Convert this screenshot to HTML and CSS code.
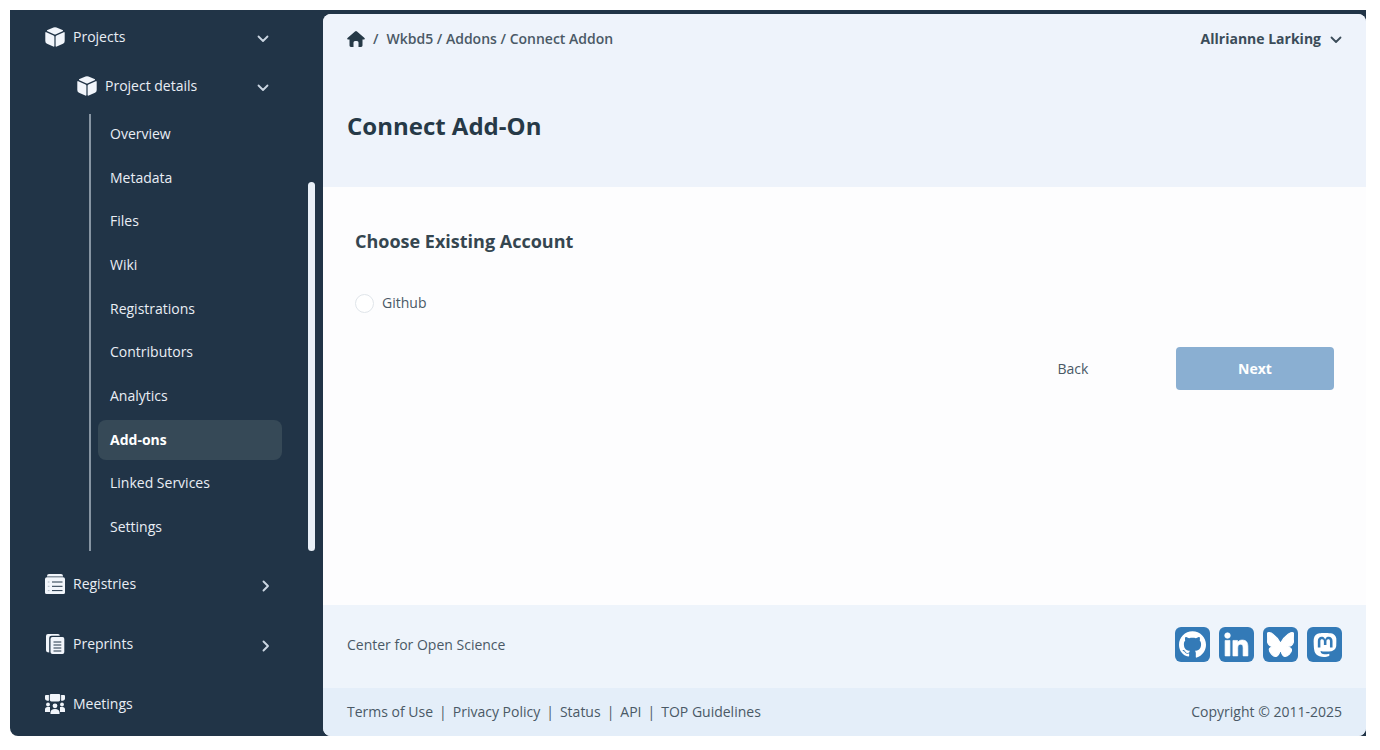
FILE: index.html
```html
<!DOCTYPE html>
<html lang="en">
<head>
<meta charset="utf-8">
<meta name="viewport" content="width=device-width, initial-scale=1">
<title>Connect Add-On</title>
<link rel="stylesheet" href="styles.css">
</head>
<body>
<svg class="defs" aria-hidden="true">
  <symbol id="cube" viewBox="0 0 20 20">
    <path d="M8.500.5Q10-.2 11.500.5L17.500 3Q18.600 3.600 17.600 4.200L11 7.200Q10 7.600 9 7.200L2.400 4.200Q1.400 3.600 2.500 3Z"/>
    <path d="M1.300 5.200 8.500 8.400Q9.400 8.800 9.400 9.800V18.800Q9.400 20 8.300 19.500L2 16.800Q.3 16 .3 14V6Q.4 4.800 1.300 5.200Z"/>
    <path d="M18.700 5.200 11.500 8.400Q10.600 8.800 10.600 9.800V18.800Q10.600 20 11.700 19.500L18 16.800Q19.700 16 19.700 14V6Q19.600 4.800 18.700 5.200Z"/>
  </symbol>
  <symbol id="down" viewBox="0 0 12 8"><path d="M1.500 1.500 6 6 10.500 1.500" fill="none" stroke="currentColor" stroke-width="1.800" stroke-linecap="round" stroke-linejoin="round"/></symbol>
  <symbol id="right" viewBox="0 0 8 12"><path d="M1.500 1.500 6 6 1.500 10.500" fill="none" stroke="currentColor" stroke-width="1.900" stroke-linecap="round" stroke-linejoin="round"/></symbol>
</svg>
<div class="app">
  <nav class="sidebar" aria-label="Main">
    <button class="row row-projects" type="button"><svg class="icon"><use href="#cube"/></svg><span>Projects</span><svg class="chev-down"><use href="#down"/></svg></button>
    <button class="row row-details" type="button"><svg class="icon"><use href="#cube"/></svg><span>Project details</span><svg class="chev-down"><use href="#down"/></svg></button>
    <div class="group">
      <ul class="sublist">
        <li><a href="#">Overview</a></li>
        <li><a href="#">Metadata</a></li>
        <li><a href="#">Files</a></li>
        <li><a href="#">Wiki</a></li>
        <li><a href="#">Registrations</a></li>
        <li><a href="#">Contributors</a></li>
        <li><a href="#">Analytics</a></li>
        <li><a href="#" class="active" aria-current="page">Add-ons</a></li>
        <li><a href="#">Linked Services</a></li>
        <li><a href="#">Settings</a></li>
      </ul>
      <div class="thumb"></div>
    </div>
    <button class="row" type="button"><svg class="icon" viewBox="0 0 20 20"><path d="M4 0h12q2 0 2 2v.4H2V2q0-2 2-2ZM2 3.200h16q2 0 2 1.800v13.500q0 1.500-1.500 1.500h-17Q0 20 0 18.500V5q0-1.800 2-1.800Z"/><path class="cut" d="M7 8H17.500M7 12.300H17.500M7 16.600H17.500"/><path class="cut faint" d="M2.800 8H4.500M2.800 12.300H4.500M2.800 16.600H4.500"/></svg><span>Registries</span><svg class="chev-right"><use href="#right"/></svg></button>
    <button class="row" type="button"><svg class="icon" viewBox="0 0 20 20"><path d="M3 0h10q1.800 0 1.800 1.800H6.500Q4.200 1.800 4.200 4v14.500Q1 18.500 1 16V2Q1 0 3 0Z"/><path d="M7.500 3h10Q19.300 3 19.300 5v13q0 2-1.800 2h-10Q5.500 20 5.500 18V5q0-2 2-2Z"/><path class="cut" d="M8.500 8H16.300M8.500 11H16.300M8.500 14H16.300M8.500 17H16.300"/></svg><span>Preprints</span><svg class="chev-right"><use href="#right"/></svg></button>
    <button class="row" type="button"><svg class="icon" viewBox="0 0 20 20"><path d="M6 0h8q1.200 0 1.200 1.200v4.600q0 1.700-1.700 1.700h-7q-1.700 0-1.700-1.700V1.200Q4.800 0 6 0ZM1 1h2.900v5.800Q0 6.800 0 4.500V2q0-1 1-1ZM19 1h-2.900v5.800q3.900 0 3.900-2.300V2q0-1-1-1Z"/><circle cx="3" cy="10.500" r="1.900"/><circle cx="17" cy="10.500" r="1.900"/><circle cx="10" cy="11.800" r="2.400"/><path d="M0 18v-2.500Q0 13 2.500 13H5v5ZM20 18v-2.500q0-2.500-2.500-2.500H15v5ZM5.500 20v-1.500q0-3.500 4.500-3.500t4.500 3.500V20Z"/></svg><span>Meetings</span></button>
  </nav>
  <div class="main">
    <header class="hero">
      <div class="topbar">
        <nav class="crumbs" aria-label="Breadcrumb">
          <a href="#" aria-label="Home"><svg class="home" viewBox="0 0 18 16"><path d="M9 0Q9.500 0 10 .4L17.500 7q.5.500.2 1.100-.3.500-1 .5h-1.200v6q0 1.400-1.400 1.400h-2.600V11.500Q11.500 10 10 10H8q-1.500 0-1.500 1.500V16H3.900q-1.400 0-1.400-1.400v-6H1.300q-.7 0-1-.5Q0 7.500.5 7L8 .4Q8.500 0 9 0Z"/></svg></a>
          <span>/</span>
          <span><a href="#">Wkbd5</a> / <a href="#">Addons</a> / <a href="#">Connect Addon</a></span>
        </nav>
        <button class="user" type="button">Allrianne Larking<svg class="chev-down"><use href="#down"/></svg></button>
      </div>
      <h1>Connect Add-On</h1>
    </header>
    <main class="content">
      <h2>Choose Existing Account</h2>
      <label class="choice"><input type="radio" name="account">Github</label>
      <div class="actions">
        <button class="back" type="button">Back</button>
        <button class="next" type="button">Next</button>
      </div>
    </main>
    <footer>
      <div class="foot-top">
        <span>Center for Open Science</span>
        <div class="social">
          <a href="#" aria-label="GitHub"><svg viewBox="0 0 24 24"><path d="M12 .297c-6.630 0-12 5.373-12 12 0 5.303 3.438 9.800 8.205 10.385.6.113.82-.258.82-.577 0-.285-.01-1.040-.015-2.040-3.338.724-4.042-1.610-4.042-1.610C4.422 18.070 3.633 17.700 3.633 17.700c-1.087-.744.084-.729.084-.729 1.205.084 1.838 1.236 1.838 1.236 1.070 1.835 2.809 1.305 3.495.998.108-.776.417-1.305.76-1.605-2.665-.3-5.466-1.332-5.466-5.930 0-1.310.465-2.380 1.235-3.220-.135-.303-.54-1.523.105-3.176 0 0 1.005-.322 3.300 1.230.96-.267 1.980-.399 3-.405 1.020.006 2.040.138 3 .405 2.280-1.552 3.285-1.230 3.285-1.230.645 1.653.24 2.873.12 3.176.765.84 1.230 1.910 1.230 3.220 0 4.610-2.805 5.625-5.475 5.920.42.36.81 1.096.81 2.220 0 1.606-.015 2.896-.015 3.286 0 .315.21.69.825.57C20.565 22.092 24 17.592 24 12.297c0-6.627-5.373-12-12-12"/></svg></a>
          <a href="#" aria-label="LinkedIn"><svg viewBox="2 2 20 20"><path d="M20.447 20.452h-3.554v-5.569c0-1.328-.027-3.037-1.852-3.037-1.853 0-2.136 1.445-2.136 2.939v5.667H9.351V9h3.414v1.561h.046c.477-.9 1.637-1.850 3.370-1.850 3.601 0 4.267 2.370 4.267 5.455v6.286zM5.337 7.433a2.062 2.062 0 0 1-2.063-2.065 2.064 2.064 0 1 1 2.063 2.065zm1.782 13.019H3.555V9h3.564v11.452z" stroke="currentColor" stroke-width=".5"/></svg></a>
          <a href="#" aria-label="Bluesky"><svg viewBox="0 0 24 24"><path d="M12 10.800c-1.087-2.114-4.046-6.053-6.798-7.995C2.566.944 1.561 1.266.902 1.565.139 1.908 0 3.080 0 3.768c0 .69.378 5.650.624 6.479.815 2.736 3.713 3.660 6.383 3.364-3.912.58-7.387 2.005-2.830 7.078 5.013 5.190 6.870-1.113 7.823-4.308.953 3.195 2.050 9.271 7.733 4.308 4.267-4.308 1.172-6.498-2.740-7.078 2.670.297 5.568-.628 6.383-3.364.246-.828.624-5.790.624-6.478 0-.69-.139-1.861-.902-2.206-.659-.298-1.664-.62-4.300 1.240C16.046 4.748 13.087 8.687 12 10.800Z" stroke="currentColor" stroke-width="1"/></svg></a>
          <a href="#" aria-label="Mastodon"><svg viewBox="0 0 24 24"><path d="M23.268 5.313c-.35-2.578-2.617-4.610-5.304-5.004C17.510.242 15.792 0 11.813 0h-.03c-3.980 0-4.835.242-5.288.309C3.882.692 1.496 2.518.917 5.127.64 6.412.61 7.837.661 9.143c.074 1.874.088 3.745.26 5.611.118 1.240.325 2.470.62 3.680.55 2.237 2.777 4.098 4.960 4.857 2.336.792 4.849.923 7.256.38.265-.061.527-.132.786-.213.585-.184 1.270-.39 1.774-.753a.057.057 0 0 0 .023-.043v-1.809a.052.052 0 0 0-.02-.041.053.053 0 0 0-.046-.01 20.282 20.282 0 0 1-4.709.545c-2.730 0-3.463-1.284-3.674-1.818a5.593 5.593 0 0 1-.319-1.433.053.053 0 0 1 .066-.054c1.517.363 3.072.546 4.632.546.376 0 .75 0 1.125-.01 1.570-.044 3.224-.124 4.768-.422.038-.008.077-.015.11-.024 2.435-.464 4.753-1.920 4.989-5.604.008-.145.03-1.520.03-1.670.002-.512.167-3.630-.024-5.545zm-3.748 9.195h-2.561V8.290c0-1.309-.55-1.976-1.670-1.976-1.230 0-1.846.79-1.846 2.350v3.403h-2.546V8.663c0-1.560-.617-2.350-1.848-2.350-1.112 0-1.668.668-1.670 1.977v6.218H4.822V8.102c0-1.310.337-2.350 1.011-3.120.696-.77 1.608-1.164 2.740-1.164 1.311 0 2.302.5 2.962 1.498l.638 1.060.638-1.060c.66-.999 1.650-1.498 2.960-1.498 1.130 0 2.043.395 2.740 1.164.675.77 1.012 1.810 1.012 3.120z"/></svg></a>
        </div>
      </div>
      <div class="foot-bottom">
        <div class="links"><a href="#">Terms of Use</a><span>|</span><a href="#">Privacy Policy</a><span>|</span><a href="#">Status</a><span>|</span><a href="#">API</a><span>|</span><a href="#">TOP Guidelines</a></div>
        <span>Copyright © 2011-2025</span>
      </div>
    </footer>
  </div>
</div>
</body>
</html>
```
FILE: styles.css
```css
* { box-sizing: border-box; }
body {
  margin: 0;
  padding: 10px 14px 14px 10px;
  background: #fff;
  color: #4a5966;
  font: 14px/20px "Open Sans", "Noto Sans", sans-serif;
}
a { color: inherit; text-decoration: none; }
button { margin: 0; padding: 0; border: 0; background: none; color: inherit; font: inherit; cursor: pointer; }
h1, h2, ul { margin: 0; padding: 0; }
svg { display: block; flex: none; fill: currentColor; }
.defs { position: absolute; width: 0; height: 0; }

.app {
  display: flex;
  min-height: calc(100vh - 24px);
  background: #213447;
  border-bottom-left-radius: 8px;
}

/* Sidebar */
.sidebar { flex: none; width: 313px; color: #e9eef5; font-weight: 500; }
.row { display: flex; align-items: center; gap: 8px; width: 100%; height: 60px; padding: 0 53px 0 35px; text-align: left; }
.row span { flex: 1; }
.row-projects { height: 53px; }
.row-details { height: 46px; padding-left: 67px; }
.icon { width: 20px; height: 20px; color: #f1f5fb; }
.cut { fill: none; stroke: #213447; stroke-width: 1; }
.faint { stroke: #a9b5c2; }
.chev-down { width: 12px; height: 8px; margin-top: 4px; }
.sidebar .chev-down { margin-right: 1px; color: #cbd6e2; }
.chev-right { width: 8px; height: 12px; margin-top: 3px; color: #cbd6e2; }
.group { display: flex; height: 437px; margin: 5px 8px 3px 79px; justify-content: space-between; }
.sublist {
  display: flex;
  flex-direction: column;
  justify-content: space-between;
  width: 193px;
  padding: 0 0 4px 7px;
  border-left: 2px solid #8795a3;
  list-style: none;
}
.sublist a { display: block; padding: 10px 12px; border-radius: 8px; }
.sublist .active { background: #364957; color: #fff; font-weight: 700; }
.thumb { width: 7px; margin-top: 68px; border-radius: 4px; background: #e9f0f8; }

/* Main panel */
.main {
  display: flex;
  flex: 1;
  flex-direction: column;
  min-width: 0;
  margin-top: 4px;
  border-radius: 8px;
  background: #fdfdfe;
  overflow: hidden;
}
.hero { height: 173px; padding: 15px 24px 0; background: #eef3fb; color: #263947; }
.topbar { display: flex; justify-content: space-between; align-items: center; }
.crumbs { display: flex; align-items: center; gap: 8px; color: #4a5966; font-weight: 600; }
.home { width: 18px; height: 16px; color: #263947; }
.user { display: flex; align-items: center; gap: 9px; color: #3b4c59; font-weight: 700; }
.user .chev-down { margin-top: 2px; }
h1 { margin-top: 61px; font-size: 24px; line-height: 32px; }
.content { flex: 1; padding: 42px 32px; }
h2 { color: #354650; font-size: 18px; line-height: 24px; }
.choice { display: flex; align-items: center; gap: 8px; margin-top: 40px; }
.choice input { appearance: none; width: 19px; height: 19px; margin: 0; border: 1px solid #e0e5ea; border-radius: 50%; background: #fff; }
.actions { display: flex; justify-content: flex-end; gap: 24px; margin-top: 34px; }
.actions button { width: 158px; height: 43px; border-radius: 4px; }
.next { background: #8aafd2; color: #fff; font-weight: 700; }
.foot-top, .foot-bottom { display: flex; justify-content: space-between; align-items: center; padding: 0 24px; }
.foot-top { height: 83px; padding-bottom: 4px; background: #eef4fb; }
.foot-bottom { height: 48px; background: #e4eef9; }
.social { display: flex; gap: 9px; }
.social a { display: grid; place-items: center; width: 35px; height: 35px; border-radius: 6px; background: #337ab7; color: #fff; }
.social svg { width: 27px; height: 27px; }
.social a:last-child svg { width: 24px; height: 24px; }
.links { display: flex; gap: 6px; }
```
